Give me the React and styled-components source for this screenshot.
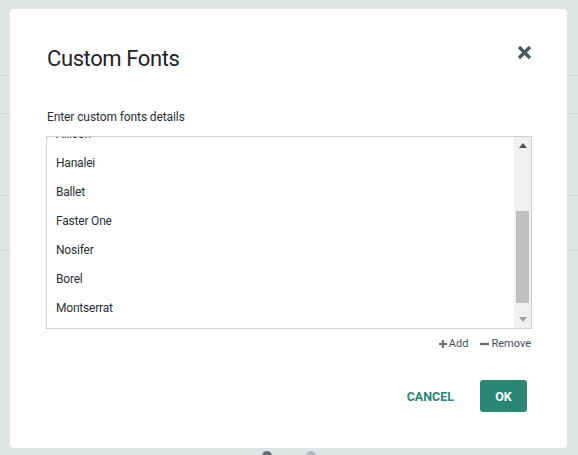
import React, { useLayoutEffect, useRef } from 'react';
import styled, { createGlobalStyle } from 'styled-components';

const GlobalStyle = createGlobalStyle`
  html, body {
    margin: 0;
    padding: 0;
    height: 100%;
    background: #e2e5e6;
    font-family: Roboto, "Liberation Sans", Arial, sans-serif;
  }
  #root {
    height: 100%;
  }
`;

const fonts = [
  'Lobster',
  'Pacifico',
  'Oswald',
  'Allison',
  'Hanalei',
  'Ballet',
  'Faster One',
  'Nosifer',
  'Borel',
  'Montserrat',
];

const Page = styled.div`
  height: 100%;
  display: flex;
  flex-direction: column;
  background: #e2e5e6;
  overflow: hidden;
`;

const PageRow = styled.div`
  height: ${(p) => p.h}px;
  flex-shrink: 0;
  border-bottom: 1px solid #d3d6d7;
  box-sizing: border-box;
`;

const PageFooter = styled.div`
  flex: 1;
  display: flex;
  align-items: flex-end;
  justify-content: center;
  gap: 34px;
  transform: translateY(6px);
`;

const Dot = styled.span`
  width: 10px;
  height: 10px;
  border-radius: 50%;
  background: ${(p) => p.color};
`;

const Overlay = styled.div`
  position: fixed;
  inset: 0;
  padding: 9px 11px 7px 10px;
  box-sizing: border-box;
  display: flex;
`;

const Dialog = styled.div`
  flex: 1;
  background: #ffffff;
  border-radius: 4px;
  display: flex;
  flex-direction: column;
  padding: 37px 40px 36px 36px;
  box-sizing: border-box;
`;

const Header = styled.div`
  display: flex;
  align-items: flex-start;
  justify-content: space-between;
  height: 26px;
`;

const Title = styled.h2`
  margin: 0 0 0 1px;
  font-size: 22px;
  line-height: 26px;
  font-weight: 400;
  letter-spacing: -0.4px;
  color: #1f2328;
`;

const CloseButton = styled.button`
  border: none;
  background: none;
  padding: 0;
  margin: -3px -6px 0 0;
  width: 18px;
  height: 18px;
  display: flex;
  align-items: center;
  justify-content: center;
  cursor: pointer;
  color: #4b5b66;
`;

const Label = styled.div`
  margin-top: 37px;
  padding-left: 1px;
  font-size: 12px;
  line-height: 16px;
  letter-spacing: -0.1px;
  color: #2b2f33;
`;

const ListBox = styled.div`
  margin-top: 11px;
  margin-right: -5px;
  height: 193px;
  box-sizing: border-box;
  border: 1px solid #cfcfcf;
  display: flex;
`;

const Viewport = styled.div`
  flex: 1;
  overflow: hidden;
  padding: 5px 0;
`;

const Item = styled.div`
  height: 29px;
  line-height: 29px;
  padding-left: 9px;
  font-size: 12px;
  letter-spacing: -0.2px;
  color: #2b2f33;
`;

const ScrollBar = styled.div`
  width: 17px;
  flex-shrink: 0;
  background: #f1f1f1;
  display: flex;
  flex-direction: column;
`;

const ScrollArrow = styled.div`
  height: 17px;
  flex-shrink: 0;
  display: flex;
  align-items: center;
  justify-content: center;
  color: ${(p) => (p.disabled ? '#a3a3a3' : '#505050')};
`;

const ScrollTrack = styled.div`
  flex: 1;
  display: flex;
  flex-direction: column;
  justify-content: flex-end;
  padding: 0 2px 8px;
`;

const ScrollThumb = styled.div`
  height: 92px;
  background: #c1c1c1;
`;

const Actions = styled.div`
  display: flex;
  justify-content: flex-end;
  gap: 12px;
  margin-top: 8px;
  margin-right: -4px;
`;

const LinkButton = styled.button`
  border: none;
  background: none;
  padding: 0;
  display: flex;
  align-items: center;
  gap: 2px;
  font-family: inherit;
  font-size: 11px;
  line-height: 14px;
  color: #4a4e52;
  cursor: pointer;
`;

const Footer = styled.div`
  margin-top: auto;
  display: flex;
  justify-content: flex-end;
  align-items: center;
  gap: 17px;
`;

const Button = styled.button`
  height: 32px;
  min-width: 47px;
  padding: 0 ${(p) => (p.primary ? 12 : 9)}px;
  border: none;
  border-radius: 3px;
  font-family: inherit;
  font-size: 12.5px;
  font-weight: 700;
  background: ${(p) => (p.primary ? '#2a8776' : 'transparent')};
  color: ${(p) => (p.primary ? '#ffffff' : '#2a8776')};
  cursor: pointer;
`;

const CloseIcon = () => (
  <svg width="15" height="15" viewBox="0 0 15 15">
    <path d="M2 2 L13 13 M13 2 L2 13" stroke="currentColor" strokeWidth="3.4" />
  </svg>
);

const PlusIcon = () => (
  <svg width="8" height="8" viewBox="0 0 8 8">
    <path d="M4 0 V8 M0 4 H8" stroke="#6b6f73" strokeWidth="2" />
  </svg>
);

const MinusIcon = () => (
  <svg width="9" height="8" viewBox="0 0 9 8">
    <path d="M0 4 H9" stroke="#6b6f73" strokeWidth="2.4" />
  </svg>
);

const Arrow = ({ down }) => (
  <svg width="8" height="5" viewBox="0 0 8 5">
    <path d={down ? 'M0 0 H8 L4 5 Z' : 'M0 5 H8 L4 0 Z'} fill="currentColor" />
  </svg>
);

export default function App() {
  const listRef = useRef(null);

  useLayoutEffect(() => {
    const el = listRef.current;
    if (el) el.scrollTop = el.scrollHeight;
  }, []);

  return (
    <>
      <GlobalStyle />
      <Page>
        <PageRow h={76} />
        <PageRow h={38} />
        <PageRow h={82} />
        <PageRow h={55} />
        <PageFooter>
          <Dot color="#6a6e72" />
          <Dot color="#b5b9bc" />
        </PageFooter>
      </Page>
      <Overlay>
        <Dialog>
          <Header>
            <Title>Custom Fonts</Title>
            <CloseButton aria-label="Close">
              <CloseIcon />
            </CloseButton>
          </Header>
          <Label>Enter custom fonts details</Label>
          <ListBox>
            <Viewport ref={listRef}>
              {fonts.map((f) => (
                <Item key={f}>{f}</Item>
              ))}
            </Viewport>
            <ScrollBar>
              <ScrollArrow>
                <Arrow />
              </ScrollArrow>
              <ScrollTrack>
                <ScrollThumb />
              </ScrollTrack>
              <ScrollArrow disabled>
                <Arrow down />
              </ScrollArrow>
            </ScrollBar>
          </ListBox>
          <Actions>
            <LinkButton>
              <PlusIcon />
              Add
            </LinkButton>
            <LinkButton>
              <MinusIcon />
              Remove
            </LinkButton>
          </Actions>
          <Footer>
            <Button>CANCEL</Button>
            <Button primary>OK</Button>
          </Footer>
        </Dialog>
      </Overlay>
    </>
  );
}
